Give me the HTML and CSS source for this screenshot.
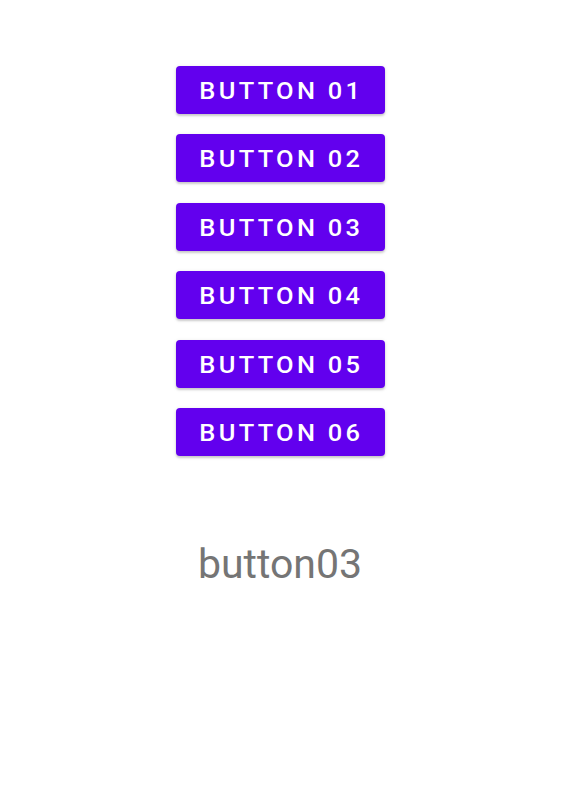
FILE: index.html
```html
<!DOCTYPE html>
<html>
<head>
<meta charset="utf-8">
<link rel="stylesheet" href="styles.css">
</head>
<body>
<div class="screen">
  <div class="buttons">
    <button class="btn"><span class="btn-text">BUTTON 01</span></button>
    <button class="btn"><span class="btn-text">BUTTON 02</span></button>
    <button class="btn"><span class="btn-text">BUTTON 03</span></button>
    <button class="btn"><span class="btn-text">BUTTON 04</span></button>
    <button class="btn"><span class="btn-text">BUTTON 05</span></button>
    <button class="btn"><span class="btn-text">BUTTON 06</span></button>
  </div>
  <div class="label">button03</div>
</div>
</body>
</html>
```
FILE: styles.css
```css
html, body {
  margin: 0;
  padding: 0;
  background: #ffffff;
}
.screen {
  width: 562px;
  height: 800px;
  display: flex;
  flex-direction: column;
  align-items: center;
  padding-top: 66px;
  padding-right: 2px;
  box-sizing: border-box;
  font-family: Roboto, "Liberation Sans", sans-serif;
}
.buttons {
  display: flex;
  flex-direction: column;
  gap: 20.4px;
}
.btn {
  width: 209px;
  height: 48px;
  border: none;
  border-radius: 4px;
  background: #6200ee;
  color: #ffffff;
  font-family: Roboto, "Liberation Sans", sans-serif;
  font-weight: 500;
  font-size: 24px;
  padding: 0 0 0 3px;
  display: flex;
  align-items: center;
  justify-content: center;
  box-shadow: 0 2px 2px rgba(0,0,0,0.14), 0 1px 4px rgba(0,0,0,0.12);
}
.btn-text {
  display: inline-block;
  letter-spacing: 3.1px;
  transform: scaleX(1.06);
  transform-origin: center;
  padding-top: 2px;
}
.label {
  margin-top: 84px;
  font-size: 41px;
  line-height: 48px;
  color: #757575;
}
```
